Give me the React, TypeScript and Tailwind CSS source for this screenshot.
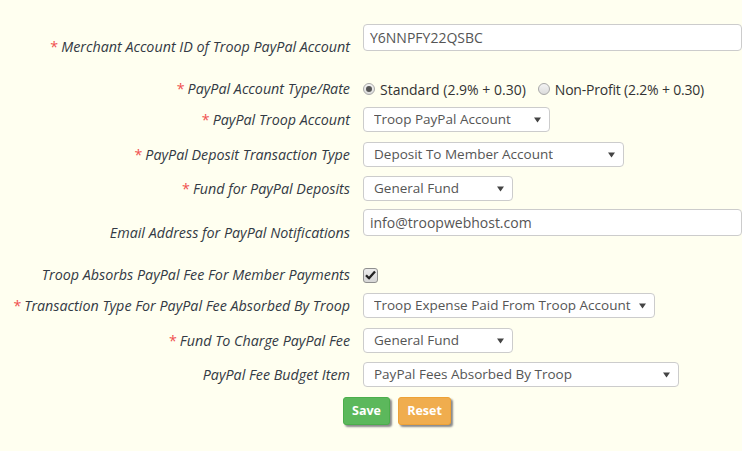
import React from "react";

const font = { fontFamily: '"Open Sans", "Noto Sans", sans-serif' };

function Req() {
  return <span className="text-[#f0504f] not-italic mr-[3px]">*</span>;
}

function Label({ text, req, className = "" }: { text: string; req?: boolean; className?: string }) {
  return (
    <div className={"w-[350px] shrink-0 text-right italic text-[14.3px] leading-[20px] text-[#333a44] whitespace-nowrap " + className}>
      {req && <Req />}
      {text}
    </div>
  );
}

function Select({ value, w }: { value: string; w: string }) {
  return (
    <div className={"h-[25px] flex items-center gap-[4px] bg-white border border-[#cccccc] rounded-[4px] pl-[10px] pr-[8px] text-[13.5px] text-[#555555] " + w}>
      <span className="whitespace-nowrap overflow-hidden">{value}</span>
      <svg className="ml-auto shrink-0" width="7" height="6" viewBox="0 0 7 6">
        <path d="M0 0.5 L7 0.5 L3.5 5.5 Z" fill="#444" />
      </svg>
    </div>
  );
}

function TextInput({ value }: { value: string }) {
  return (
    <div className="h-[27px] w-[400px] flex items-center bg-white border border-[#cccccc] rounded-[4px] pl-[6px] text-[14px] text-[#555555]">
      {value}
    </div>
  );
}

function Radio({ checked }: { checked?: boolean }) {
  return (
    <span className="w-[12px] h-[12px] rounded-full border border-[#a8a8a8] bg-gradient-to-b from-[#f4f4f4] to-[#dcdcdc] flex items-center justify-center shrink-0">
      {checked && <span className="w-[6px] h-[6px] rounded-full bg-[#555]" />}
    </span>
  );
}

export default function App() {
  return (
    <div className="w-[742px] h-[451px] overflow-hidden bg-[#fffff0]" style={font}>
      <div className="flex flex-col pt-[24px]">
        <div className="flex items-start gap-[13px] h-[27px]">
          <Label text="Merchant Account ID of Troop PayPal Account" req className="pt-[13px]" />
          <TextInput value="Y6NNPFY22QSBC" />
        </div>
        <div className="flex items-center gap-[13px] mt-[28px] h-[20px]">
          <Label text="PayPal Account Type/Rate" req />
          <div className="flex items-center text-[14px] text-[#333]">
            <Radio checked />
            <span className="ml-[5px]">Standard (2.9% + 0.30)</span>
            <span className="ml-[12px]"><Radio /></span>
            <span className="ml-[5px] tracking-[-0.2px]">Non-Profit (2.2% + 0.30)</span>
          </div>
        </div>
        <div className="flex items-center gap-[13px] mt-[8px]">
          <Label text="PayPal Troop Account" req />
          <Select value="Troop PayPal Account" w="w-[187px]" />
        </div>
        <div className="flex items-center gap-[13px] mt-[10px]">
          <Label text="PayPal Deposit Transaction Type" req />
          <Select value="Deposit To Member Account" w="w-[261px]" />
        </div>
        <div className="flex items-center gap-[13px] mt-[9px]">
          <Label text="Fund for PayPal Deposits" req />
          <Select value="General Fund" w="w-[150px]" />
        </div>
        <div className="flex items-start gap-[13px] mt-[8px] h-[28px]">
          <Label text="Email Address for PayPal Notifications" className="pt-[14px]" />
          <TextInput value="info@troopwebhost.com" />
        </div>
        <div className="flex items-center gap-[13px] mt-[28px] h-[20px]">
          <Label text="Troop Absorbs PayPal Fee For Member Payments" />
          <div className="w-[15px] h-[15px] rounded-[3px] border border-[#8f8f8f] bg-gradient-to-b from-[#ececec] to-[#d6d6d6] flex items-center justify-center">
            <svg width="11" height="10" viewBox="0 0 11 10">
              <path d="M1 5.2 L4 8.3 L10 1.5" stroke="#222" strokeWidth="2.3" fill="none" strokeLinejoin="round" />
            </svg>
          </div>
        </div>
        <div className="flex items-center gap-[13px] mt-[8px]">
          <Label text="Transaction Type For PayPal Fee Absorbed By Troop" req />
          <Select value="Troop Expense Paid From Troop Account" w="w-[292px]" />
        </div>
        <div className="flex items-center gap-[13px] mt-[10px]">
          <Label text="Fund To Charge PayPal Fee" req />
          <Select value="General Fund" w="w-[150px]" />
        </div>
        <div className="flex items-center gap-[13px] mt-[9px]">
          <Label text="PayPal Fee Budget Item" />
          <Select value="PayPal Fees Absorbed By Troop" w="w-[316px]" />
        </div>
        <div className="flex gap-[8px] mt-[10px] pl-[343px]">
          <button className="h-[28px] w-[47px] bg-[#5cb85c] border border-[#4cae4c] rounded-[3px] text-white font-bold text-[12.5px] shadow-[2px_2px_2px_#8a8a8a]">
            Save
          </button>
          <button className="h-[28px] w-[53px] bg-[#f0ad4e] border border-[#eea236] rounded-[3px] text-white font-bold text-[12.5px] shadow-[2px_2px_2px_#8a8a8a]">
            Reset
          </button>
        </div>
      </div>
    </div>
  );
}
